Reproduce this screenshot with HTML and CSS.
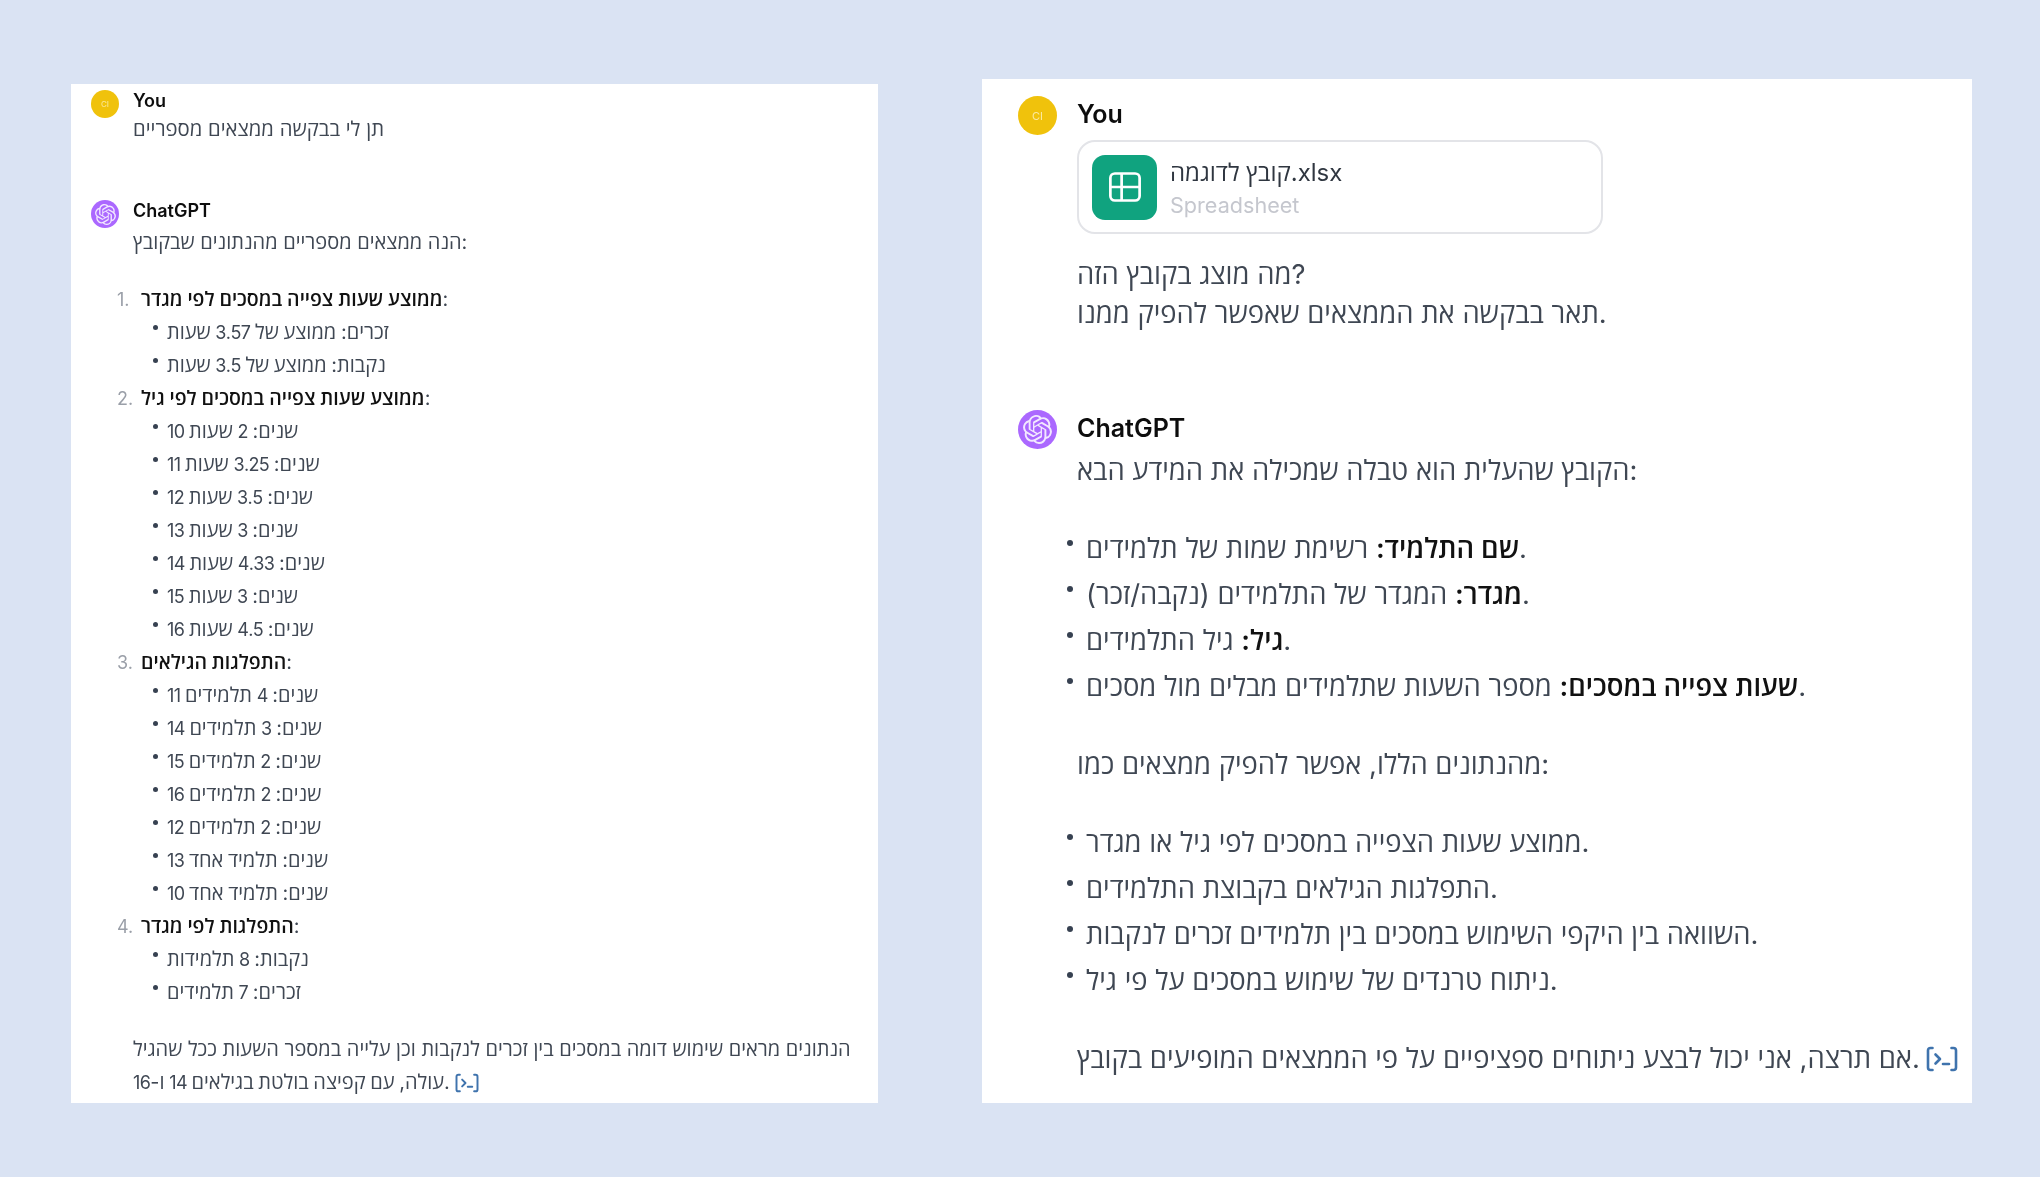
FILE: index.html
```html
<!DOCTYPE html>
<html lang="he">
<head>
<meta charset="utf-8">
<title>ChatGPT</title>
<link rel="stylesheet" href="styles.css">
</head>
<body>
<svg class="defs" width="0" height="0" aria-hidden="true">
  <symbol id="logo" viewBox="0 0 24 24"><path fill="currentColor" d="M22.2819 9.8211a5.9847 5.9847 0 0 0-.5157-4.9108 6.0462 6.0462 0 0 0-6.5098-2.9A6.0651 6.0651 0 0 0 4.9807 4.1818a5.9847 5.9847 0 0 0-3.9977 2.9 6.0462 6.0462 0 0 0 .7427 7.0966 5.98 5.98 0 0 0 .511 4.9107 6.051 6.051 0 0 0 6.5146 2.9001A5.9847 5.9847 0 0 0 13.2599 24a6.0557 6.0557 0 0 0 5.7718-4.2058 5.9894 5.9894 0 0 0 3.9977-2.9001 6.0557 6.0557 0 0 0-.7475-7.0729zm-9.022 12.6081a4.4755 4.4755 0 0 1-2.8764-1.0408l.1419-.0804 4.7783-2.7582a.7948.7948 0 0 0 .3927-.6813v-6.7369l2.02 1.1686a.071.071 0 0 1 .038.052v5.5826a4.504 4.504 0 0 1-4.4945 4.4944zm-9.6607-4.1254a4.4708 4.4708 0 0 1-.5346-3.0137l.142.0852 4.783 2.7582a.7712.7712 0 0 0 .7806 0l5.8428-3.3685v2.3324a.0804.0804 0 0 1-.0332.0615L9.74 19.9502a4.4992 4.4992 0 0 1-6.1408-1.6464zM2.3408 7.8956a4.485 4.485 0 0 1 2.3655-1.9728V11.6a.7664.7664 0 0 0 .3879.6765l5.8144 3.3543-2.0201 1.1685a.0757.0757 0 0 1-.071 0l-4.8303-2.7865A4.504 4.504 0 0 1 2.3408 7.872zm16.5963 3.8558L13.1038 8.364 15.1192 7.2a.0757.0757 0 0 1 .071 0l4.8303 2.7913a4.4944 4.4944 0 0 1-.6765 8.1042v-5.6772a.79.79 0 0 0-.407-.667zm2.0107-3.0231l-.142-.0852-4.7735-2.7818a.7759.7759 0 0 0-.7854 0L9.409 9.2297V6.8974a.0662.0662 0 0 1 .0284-.0615l4.8303-2.7866a4.4992 4.4992 0 0 1 6.6802 4.66zM8.3065 12.863l-2.02-1.1638a.0804.0804 0 0 1-.038-.0567V6.0742a4.4992 4.4992 0 0 1 7.3757-3.4537l-.142.0805L8.704 5.459a.7948.7948 0 0 0-.3927.6813zm1.0976-2.3654l2.602-1.4998 2.6069 1.4998v2.9994l-2.5974 1.4997-2.6067-1.4997Z"/></symbol>
  <symbol id="cite" viewBox="0 0 32 26"><g fill="none" stroke="currentColor" stroke-width="2.6" stroke-linecap="round" stroke-linejoin="round"><path d="M6.5 2H4.5Q2 2 2 4.5v17Q2 24 4.5 24h2"/><path d="M25.5 2h2Q30 2 30 4.5v17Q30 24 27.5 24h-2"/><path d="M9.5 8.5l4.5 4.5-4.5 4.5"/><path d="M17 18h6"/></g></symbol>
</svg>
<main class="page">
  <section class="panel panel-small">
    <article class="msg msg-you">
      <div class="avatar avatar-you">CI</div>
      <div class="content">
        <div class="name">You</div>
        <p class="first">תן לי בבקשה ממצאים מספריים</p>
      </div>
    </article>
    <article class="msg msg-gpt">
      <div class="avatar avatar-gpt"><svg class="logo"><use href="#logo"/></svg></div>
      <div class="content">
        <div class="name">ChatGPT</div>
        <p class="first">הנה ממצאים מספריים מהנתונים שבקובץ:</p>
        <ol class="numbered">
          <li><strong>ממוצע שעות צפייה במסכים לפי מגדר</strong>:
            <ul>
              <li>זכרים: ממוצע של <span class="num">3.57</span> שעות</li>
              <li>נקבות: ממוצע של <span class="num">3.5</span> שעות</li>
            </ul>
          </li>
          <li><strong>ממוצע שעות צפייה במסכים לפי גיל</strong>:
            <ul>
              <li><span class="num">10</span> שנים: <span class="num">2</span> שעות</li>
              <li><span class="num">11</span> שנים: <span class="num">3.25</span> שעות</li>
              <li><span class="num">12</span> שנים: <span class="num">3.5</span> שעות</li>
              <li><span class="num">13</span> שנים: <span class="num">3</span> שעות</li>
              <li><span class="num">14</span> שנים: <span class="num">4.33</span> שעות</li>
              <li><span class="num">15</span> שנים: <span class="num">3</span> שעות</li>
              <li><span class="num">16</span> שנים: <span class="num">4.5</span> שעות</li>
            </ul>
          </li>
          <li><strong>התפלגות הגילאים</strong>:
            <ul>
              <li><span class="num">11</span> שנים: <span class="num">4</span> תלמידים</li>
              <li><span class="num">14</span> שנים: <span class="num">3</span> תלמידים</li>
              <li><span class="num">15</span> שנים: <span class="num">2</span> תלמידים</li>
              <li><span class="num">16</span> שנים: <span class="num">2</span> תלמידים</li>
              <li><span class="num">12</span> שנים: <span class="num">2</span> תלמידים</li>
              <li><span class="num">13</span> שנים: תלמיד אחד</li>
              <li><span class="num">10</span> שנים: תלמיד אחד</li>
            </ul>
          </li>
          <li><strong>התפלגות לפי מגדר</strong>:
            <ul>
              <li>נקבות: <span class="num">8</span> תלמידות</li>
              <li>זכרים: <span class="num">7</span> תלמידים</li>
            </ul>
          </li>
        </ol>
        <p class="closing">הנתונים מראים שימוש דומה במסכים בין זכרים לנקבות וכן עלייה במספר השעות ככל שהגיל<br><span class="tight">עולה, עם קפיצה בולטת בגילאים <span class="num">14</span> ו-<span class="num">16</span>.</span> <svg class="cite"><use href="#cite"/></svg></p>
      </div>
    </article>
  </section>

  <section class="panel panel-large">
    <article class="msg msg-you">
      <div class="avatar avatar-you">CI</div>
      <div class="content">
        <div class="name">You</div>
        <div class="file">
          <div class="file-icon">
            <svg viewBox="0 0 32 32" class="file-glyph"><g fill="none" stroke="currentColor" stroke-width="2.4" stroke-linejoin="round"><rect x="3" y="4" width="26" height="24" rx="4"/><path d="M3 16h26M13 4v24"/></g></svg>
          </div>
          <div class="file-text">
            <div class="file-name">קובץ לדוגמה.xlsx</div>
            <div class="file-type">Spreadsheet</div>
          </div>
        </div>
        <p class="question">מה מוצג בקובץ הזה?</p>
        <p>תאר בבקשה את הממצאים שאפשר להפיק ממנו.</p>
      </div>
    </article>
    <article class="msg msg-gpt">
      <div class="avatar avatar-gpt"><svg class="logo"><use href="#logo"/></svg></div>
      <div class="content">
        <div class="name">ChatGPT</div>
        <p class="first">הקובץ שהעלית הוא טבלה שמכילה את המידע הבא:</p>
        <ul class="bullets">
          <li><strong>שם התלמיד:</strong> רשימת שמות של תלמידים.</li>
          <li><strong>מגדר:</strong> המגדר של התלמידים (נקבה/זכר).</li>
          <li><strong>גיל:</strong> גיל התלמידים.</li>
          <li><strong>שעות צפייה במסכים:</strong> מספר השעות שתלמידים מבלים מול מסכים.</li>
        </ul>
        <p class="between">מהנתונים הללו, אפשר להפיק ממצאים כמו:</p>
        <ul class="bullets">
          <li>ממוצע שעות הצפייה במסכים לפי גיל או מגדר.</li>
          <li>התפלגות הגילאים בקבוצת התלמידים.</li>
          <li>השוואה בין היקפי השימוש במסכים בין תלמידים זכרים לנקבות.</li>
          <li>ניתוח טרנדים של שימוש במסכים על פי גיל.</li>
        </ul>
        <p class="between">אם תרצה, אני יכול לבצע ניתוחים ספציפיים על פי הממצאים המופיעים בקובץ. <svg class="cite"><use href="#cite"/></svg></p>
      </div>
    </article>
  </section>
</main>
</body>
</html>
```
FILE: styles.css
```css
* { box-sizing: border-box; }
html, body { margin: 0; height: 100%; }
body {
  background: #dae3f3;
  font-family: Inter, "Open Sans", "Liberation Sans", sans-serif;
  color: #3f4753;
  overflow: hidden;
}
.defs { position: absolute; }
p, ol, ul { margin: 0; padding: 0; list-style: none; }
.page {
  display: flex;
  align-items: flex-end;
  gap: 104px;
  height: 1103px;
  padding-left: 71px;
}
.panel { background: #fff; flex: none; overflow: hidden; }
.msg { display: flex; }
.avatar, .content { filter: blur(.35px); }
.content { flex: 1; min-width: 0; }
.name { font-weight: 600; color: #0d0d0d; }
strong { font-weight: 600; color: #111; }
.avatar {
  flex: none;
  border-radius: 50%;
  display: flex;
  align-items: center;
  justify-content: center;
}
.avatar-you { background: #f0c20c; color: #fbe9a0; }
.avatar-gpt { background: #ab68ff; color: #f2e8ff; }
.logo { display: block; }
.cite { color: #3f73ad; vertical-align: -3px; }

/* left */
.panel-small {
  width: 807px;
  height: 1019px;
  padding: 2px 0 0 20px;
  font-size: 20px;
}
.panel-small .msg { gap: 14px; }
.panel-small .avatar { width: 28px; height: 28px; margin-top: 4px; font-size: 8px; }
.panel-small .logo { width: 21px; height: 21px; }
.panel-small .msg-gpt { margin-top: 53px; }
.panel-small .name { line-height: 30px; font-size: 18px; }
.panel-small p { line-height: 28px; }
.panel-small .msg-you .first { margin-top: -1px; font-size: 20.3px; }
.panel-small .msg-gpt .first { padding-top: 2px; }
.panel-small strong { font-size: 19.5px; }
.num { font-size: 18px; letter-spacing: -.6px; }
.numbered { margin: 27px 0 0 -18px; counter-reset: n; line-height: 33px; }
.numbered > li { counter-increment: n; }
.numbered > li::before {
  content: counter(n) ".";
  display: inline-block;
  width: 24px;
  padding-left: 2px;
  font-size: 18px;
  color: #9a9fa8;
}
.numbered ul { margin-left: 38px; word-spacing: -1px; }
.numbered ul li::before {
  content: "";
  display: inline-block;
  width: 5px;
  height: 5px;
  margin-right: 9px;
  border-radius: 50%;
  background: #374151;
  vertical-align: 9px;
}
.panel-small .closing { margin-top: 24px; line-height: 33px; white-space: nowrap; }
.tight { word-spacing: -1px; }
.panel-small .cite { width: 24px; height: 20px; vertical-align: -4px; }

/* right */
.panel-large {
  width: 990px;
  height: 1024px;
  padding: 18px 0 0 36px;
  font-size: 27.4px;
}
.panel-large .msg { gap: 20px; }
.panel-large .avatar { width: 39px; height: 39px; margin-top: -1px; font-size: 11px; }
.panel-large .logo { width: 29px; height: 29px; }
.panel-large .msg-gpt { margin-top: 78px; }
.panel-large .name { line-height: 34px; font-size: 25px; }
.panel-large p { line-height: 39px; }
.panel-large .cite { width: 32px; height: 26px; margin-left: -2px; vertical-align: -4px; }
.file {
  width: 526px;
  height: 94px;
  margin-top: 9px;
  padding: 0 13px;
  display: flex;
  align-items: center;
  gap: 13px;
  border: 2px solid #e3e4e8;
  border-radius: 18px;
}
.file-icon {
  width: 65px;
  height: 65px;
  flex: none;
  border-radius: 13px;
  background: #10a37f;
  color: #fff;
  display: flex;
  align-items: center;
  justify-content: center;
}
.file-glyph { width: 36px; height: 36px; }
.file-text { padding-top: 3px; }
.file-name { font-size: 24px; line-height: 32px; color: #2f3640; }
.file-type { font-size: 21.6px; line-height: 32px; color: #c5c7ce; }
.question { margin-top: 21px; }
.panel-large .first { margin-top: 6px; }
.bullets { margin: 35px 0 0 -10px; line-height: 46px; }
.bullets li::before {
  content: "";
  display: inline-block;
  width: 6px;
  height: 6px;
  margin-right: 13px;
  border-radius: 50%;
  background: #374151;
  vertical-align: 12px;
}
.panel-large .between { margin-top: 36px; }
```
